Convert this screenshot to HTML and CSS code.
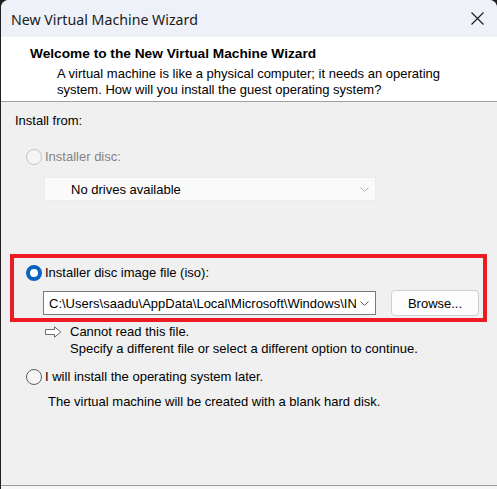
FILE: index.html
```html
<!DOCTYPE html>
<html>
<head>
<meta charset="utf-8">
<link rel="stylesheet" href="styles.css">
</head>
<body>
<div class="window">
  <div class="titlebar">
    <span class="title">New Virtual Machine Wizard</span>
    <svg class="close" width="13" height="13" viewBox="0 0 13 13"><path d="M0.5 0.5 L12.5 12.5 M12.5 0.5 L0.5 12.5" stroke="#1a1a1a" stroke-width="1.1" fill="none"/></svg>
  </div>
  <div class="header">
    <div class="h-title">Welcome to the New Virtual Machine Wizard</div>
    <div class="h-desc">A virtual machine is like a physical computer; it needs an operating<br>system. How will you install the guest operating system?</div>
  </div>
  <div class="content">
    <div class="section-label">Install from:</div>
    <div class="option disabled option-disc">
      <span class="radio"></span><span class="opt-text">Installer disc:</span>
    </div>
    <div class="combo combo-disabled">
      <span class="combo-text">No drives available</span>
      <svg class="chevron" width="9" height="5" viewBox="0 0 9 5"><path d="M0.5 0.5 L4.5 4.5 L8.5 0.5" stroke="#b4b4b4" stroke-width="1" fill="none"/></svg>
    </div>
    <div class="highlight">
      <div class="option">
        <span class="radio checked"></span><span class="opt-text">Installer disc image file (iso):</span>
      </div>
      <div class="file-row">
        <div class="combo combo-path">
          <span class="combo-text">C:\Users\saadu\AppData\Local\Microsoft\Windows\IN</span>
          <svg class="chevron" width="9" height="5" viewBox="0 0 9 5"><path d="M0.5 0.5 L4.5 4.5 L8.5 0.5" stroke="#606060" stroke-width="1" fill="none"/></svg>
        </div>
        <button class="browse">Browse...</button>
      </div>
    </div>
    <div class="warning">
      <svg class="arrow" width="17" height="12" viewBox="0 0 17 12"><path d="M0.5 3.5 H9.5 V0.8 L15.8 6 L9.5 11.2 V8.5 H0.5 Z" fill="#ffffff" stroke="#6b6b6b" stroke-width="1"/></svg>
      <div class="warn-text">
        <div>Cannot read this file.</div>
        <div>Specify a different file or select a different option to continue.</div>
      </div>
    </div>
    <div class="option option-later">
      <span class="radio"></span><span class="opt-text">I will install the operating system later.</span>
    </div>
    <div class="note">The virtual machine will be created with a blank hard disk.</div>
  </div>
  <div class="footer"></div>
</div>
</body>
</html>
```
FILE: styles.css
```css
* { box-sizing: border-box; }
html, body { margin: 0; padding: 0; }
body {
  background: #202020;
  width: 497px;
  height: 489px;
  overflow: hidden;
  font-family: "Liberation Sans", Arial, sans-serif;
  font-size: 13px;
  color: #000;
}
.window {
  margin-left: 1px;
  height: 489px;
  background: #f0f0f0;
  border-radius: 8px 8px 0 0;
  overflow: hidden;
  display: flex;
  flex-direction: column;
}
.titlebar {
  height: 37px;
  background: #eef2f8;
  display: flex;
  align-items: center;
  justify-content: space-between;
  padding: 0 13px 0 10px;
  flex: none;
}
.title {
  font-family: "Noto Sans", "Open Sans", sans-serif;
  font-size: 14.2px;
  color: #1a1a1a;
  position: relative;
  top: 1px;
}
.close { display: block; }
.header {
  background: #ffffff;
  height: 65px;
  border-bottom: 1px solid #a0a0a0;
  padding: 9px 0 0 29px;
  flex: none;
}
.h-title {
  font-weight: bold;
  font-size: 13.7px;
  line-height: 16px;
  color: #000;
}
.h-desc {
  margin-top: 4px;
  padding-left: 27px;
  font-size: 13px;
  line-height: 16px;
  color: #000;
}
.content {
  flex: 1;
  padding: 11px 0 0 14px;
  display: flex;
  flex-direction: column;
}
.section-label {
  line-height: 16px;
}
.option {
  display: flex;
  align-items: center;
  height: 18px;
  line-height: 16px;
}
.option-disc { margin: 19px 0 0 11px; }
.option .radio {
  width: 16px;
  height: 16px;
  border-radius: 50%;
  border: 1px solid #5e5e5e;
  background: #f6f6f6;
  flex: none;
  margin-right: 3px;
}
.option.disabled .radio {
  border-color: #c4c4c4;
  background: #f5f5f5;
}
.option.disabled .opt-text { color: #838383; }
.radio.checked {
  border: 4.5px solid #0a63c0;
  background: #ffffff;
}
.combo {
  height: 24px;
  display: flex;
  align-items: center;
  justify-content: space-between;
}
.combo-disabled {
  margin: 11px 0 0 29px;
  width: 332px;
  background: #fafafa;
  border: 1px solid #ececec;
  padding: 0 6px 0 26px;
}
.combo-text {
  white-space: nowrap;
  overflow: hidden;
}
.chevron { flex: none; display: block; }
.highlight {
  margin: 53px 0 0 -5px;
  width: 477px;
  height: 68px;
  border: 4px solid #ec1c24;
  padding: 6px 0 0 12px;
}
.file-row {
  display: flex;
  align-items: center;
  margin-top: 8px;
}
.combo-path {
  margin-left: 17px;
  width: 333px;
  height: 24px;
  background: #ffffff;
  border: 1px solid #7a7a7a;
  padding: 0 6px 0 5px;
}
.combo-path .combo-text {
  flex: 1;
  text-overflow: clip;
}
.combo-path .chevron { margin-left: 4px; }
.browse {
  margin-left: 15px;
  width: 88px;
  height: 26px;
  border: 1px solid #d0d0d0;
  border-radius: 4px;
  background: #fdfdfd;
  font-family: "Liberation Sans", Arial, sans-serif;
  font-size: 13px;
  color: #000;
  padding: 0;
}
.warning {
  display: flex;
  margin: 1px 0 0 30px;
  line-height: 17px;
}
.arrow { margin-top: 3px; margin-right: 8px; flex: none; }
.option-later { margin: 11px 0 0 11px; }
.note {
  margin: 8px 0 0 33px;
  line-height: 16px;
}
.footer {
  height: 4px;
  border-top: 1px solid #9a9a9a;
  background: #f7f7f7;
  flex: none;
}
```
